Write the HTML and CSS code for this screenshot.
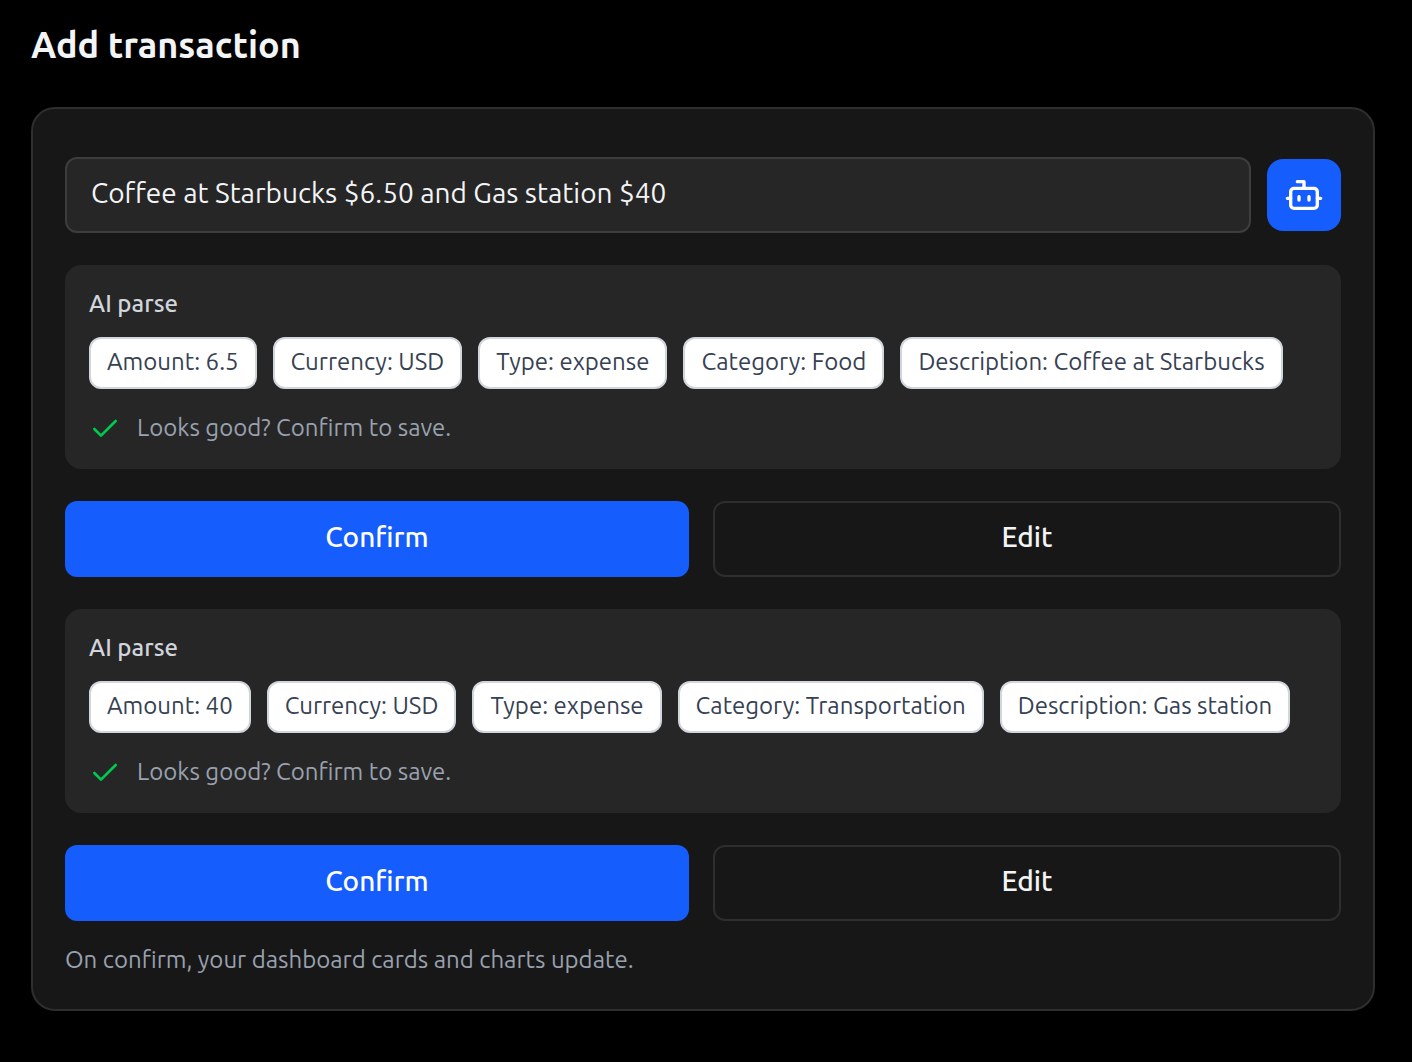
FILE: index.html
```html
<!DOCTYPE html>
<html lang="en">
<head>
<meta charset="utf-8">
<meta name="viewport" content="width=device-width, initial-scale=1">
<title>Add transaction</title>
<link rel="stylesheet" href="styles.css">
</head>
<body>
<main class="page">
  <h1 class="page-title">Add transaction</h1>
  <section class="card">
    <form class="entry">
      <input class="entry-input" type="text" aria-label="Transaction" value="Coffee at Starbucks $6.50 and Gas station $40">
      <button class="parse-button" type="button" aria-label="Parse with AI">
        <svg class="bot-icon" viewBox="0 0 24 24" aria-hidden="true"><path d="M12 8V4H8"/><rect width="16" height="12" x="4" y="8" rx="2"/><path d="M2 14h2M20 14h2M15 13v2M9 13v2"/></svg>
      </button>
    </form>

    <section class="parse">
      <h2 class="parse-title">AI parse</h2>
      <ul class="chips">
        <li class="chip">Amount: 6.5</li>
        <li class="chip">Currency: USD</li>
        <li class="chip">Type: expense</li>
        <li class="chip">Category: Food</li>
        <li class="chip">Description: Coffee at Starbucks</li>
      </ul>
      <p class="status"><svg class="check-icon" viewBox="0 0 24 24" aria-hidden="true"><path d="M20 6 9 17l-5-5"/></svg>Looks good? Confirm to save.</p>
    </section>
    <div class="actions">
      <button class="button button-primary" type="button">Confirm</button>
      <button class="button button-outline" type="button">Edit</button>
    </div>

    <section class="parse">
      <h2 class="parse-title">AI parse</h2>
      <ul class="chips">
        <li class="chip">Amount: 40</li>
        <li class="chip">Currency: USD</li>
        <li class="chip">Type: expense</li>
        <li class="chip">Category: Transportation</li>
        <li class="chip">Description: Gas station</li>
      </ul>
      <p class="status"><svg class="check-icon" viewBox="0 0 24 24" aria-hidden="true"><path d="M20 6 9 17l-5-5"/></svg>Looks good? Confirm to save.</p>
    </section>
    <div class="actions">
      <button class="button button-primary" type="button">Confirm</button>
      <button class="button button-outline" type="button">Edit</button>
    </div>

    <p class="note">On confirm, your dashboard cards and charts update.</p>
  </section>
</main>
</body>
</html>
```
FILE: styles.css
```css
* {
  box-sizing: border-box;
  margin: 0;
}

body {
  background: #000;
  color: #f3f4f6;
  font-family: Ubuntu, "Noto Sans", sans-serif;
  font-size: 24px;
  font-weight: 400;
  line-height: 30px;
}

button,
input {
  font: inherit;
  color: inherit;
}

.page {
  padding: 25px 37px 48px 31px;
}

.page-title {
  margin-bottom: 42px;
  font-size: 36px;
  font-weight: 600;
  line-height: 40px;
}

.card {
  padding: 48px 32px 34px;
  background: #171717;
  border: 2px solid #2e2e2e;
  border-radius: 24px;
}

.entry {
  display: flex;
  align-items: center;
  gap: 16px;
}

.entry-input {
  flex: 1;
  min-width: 0;
  height: 76px;
  padding: 0 24px 6px;
  background: #262626;
  border: 2px solid #3d3d3d;
  border-radius: 12px;
  font-size: 28px;
}

.parse-button {
  display: flex;
  align-items: center;
  justify-content: center;
  width: 74px;
  height: 72px;
  padding: 0;
  background: #155dfc;
  border: 0;
  border-radius: 16px;
  color: #fff;
}

.bot-icon,
.check-icon {
  fill: none;
  stroke: currentColor;
  stroke-width: 2;
  stroke-linecap: round;
  stroke-linejoin: round;
}

.bot-icon {
  width: 40px;
  height: 40px;
}

.parse {
  margin-top: 32px;
  padding: 24px;
  background: #262626;
  border-radius: 16px;
}

.parse-title {
  color: #d1d5dc;
  font-size: 24px;
  font-weight: 500;
}

.chips {
  display: flex;
  flex-wrap: wrap;
  gap: 16px;
  margin-top: 18px;
  padding: 0;
  list-style: none;
}

.chip {
  padding: 8px 16px 10px;
  background: #fff;
  border: 2px solid #d1d5dc;
  border-radius: 12px;
  color: #364153;
}

.status {
  display: flex;
  align-items: flex-start;
  gap: 16px;
  margin-top: 24px;
  color: #99a1af;
}

.check-icon {
  width: 32px;
  height: 32px;
  color: #00c950;
}

.actions {
  display: flex;
  gap: 24px;
  margin-top: 32px;
}

.button {
  flex: 1 1 0;
  height: 76px;
  padding: 0 24px 4px;
  border: 0;
  border-radius: 12px;
  font-size: 28px;
  font-weight: 500;
}

.button-primary {
  background: #155dfc;
  color: #fff;
}

.button-outline {
  background: transparent;
  border: 2px solid #2e2e2e;
}

.note {
  margin-top: 24px;
  color: #99a1af;
}
```
